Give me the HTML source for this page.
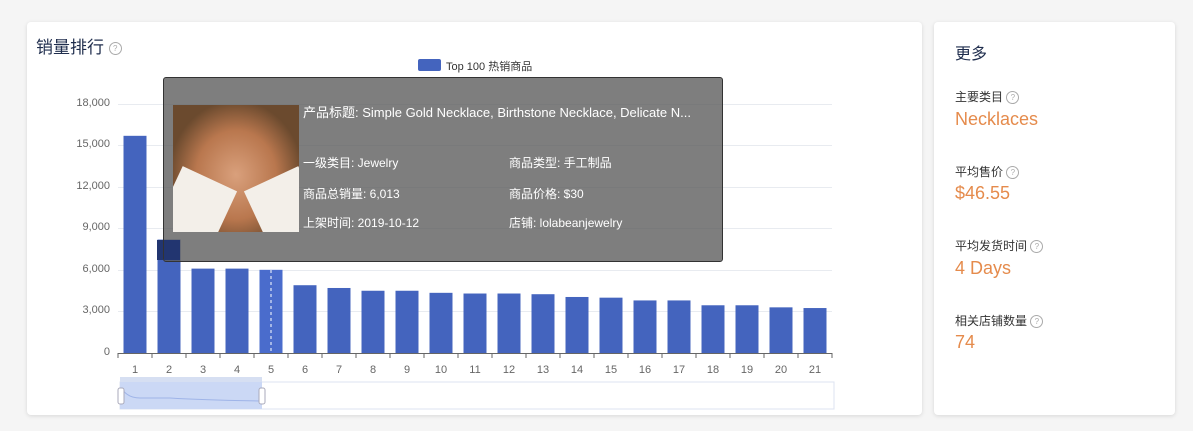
<!DOCTYPE html>
<html><head><meta charset="utf-8"><style>
body{margin:0;width:1193px;height:431px;background:#f5f5f5;font-family:"Liberation Sans","Noto Sans CJK SC",sans-serif;position:relative;overflow:hidden}
.card{position:absolute;background:#fff;border-radius:4px;box-shadow:0 1px 4px rgba(0,0,0,.12)}
.q{display:inline-block;width:11px;height:11px;border:1px solid #aaa;border-radius:50%;font-size:8px;color:#aaa;text-align:center;line-height:11px;vertical-align:middle}
.lbl{position:absolute;left:955px;font-size:12px;color:#333}
.val{position:absolute;left:955px;font-size:18px;color:#e58b4c}
.yl{position:absolute;width:60px;left:50px;text-align:right;font-size:11px;color:#666}
.xl{position:absolute;width:34px;text-align:center;font-size:11px;color:#666;top:364px}
.tt{position:absolute;color:#fff;font-size:12px}
</style></head><body>
<div class="card" style="left:27px;top:22px;width:895px;height:393px"></div>
<div class="card" style="left:934px;top:22px;width:241px;height:393px"></div>
<div style="position:absolute;left:36px;top:33px;font-size:17px;color:#1f2d4d">销量排行 <span class="q">?</span></div>
<div style="position:absolute;left:418px;top:59px;width:23px;height:12px;background:#4464be;border-radius:2px"></div>
<div style="position:absolute;left:446px;top:58px;font-size:11px;color:#333">Top 100 热销商品</div>
<svg style="position:absolute;left:0;top:0" width="1193" height="431">
<g stroke="#e8ebf0" stroke-width="1">
<line x1="118" x2="832" y1="104.5" y2="104.5"/><line x1="118" x2="832" y1="145.5" y2="145.5"/><line x1="118" x2="832" y1="187.5" y2="187.5"/><line x1="118" x2="832" y1="228.5" y2="228.5"/><line x1="118" x2="832" y1="270.5" y2="270.5"/><line x1="118" x2="832" y1="311.5" y2="311.5"/>
</g>
<g fill="#4464be" id="bars"></g>
<line x1="118" x2="832" y1="353.5" y2="353.5" stroke="#666"/>
<g stroke="#666" id="ticks"></g>
<line x1="271" x2="271" y1="240" y2="353" stroke="#fff" stroke-dasharray="3,3"/>
<rect x="120" y="382" width="714" height="27" fill="#fff" stroke="#dde3f0"/>
<rect x="120" y="382" width="142" height="27" fill="#cbd8f5"/>
<rect x="120" y="377" width="142" height="5" fill="#d6dff2"/>
<path d="M122 389 Q128 398 140 398 L170 398 Q200 400 260 401" stroke="#9fb4e8" fill="none"/>
<rect x="118" y="388" width="6" height="16" rx="2" fill="#fff" stroke="#aab"/>
<rect x="259" y="388" width="6" height="16" rx="2" fill="#fff" stroke="#aab"/>
</svg>
<div class="yl" style="top:97px">18,000</div><div class="yl" style="top:138px">15,000</div><div class="yl" style="top:180px">12,000</div><div class="yl" style="top:221px">9,000</div><div class="yl" style="top:263px">6,000</div><div class="yl" style="top:304px">3,000</div><div class="yl" style="top:346px">0</div>
<div id="xls"></div>
<div style="position:absolute;left:163px;top:77px;width:558px;height:183px;background:rgba(90,90,90,.78);border:1px solid #333;border-radius:3px"></div>
<div style="position:absolute;left:157px;top:240px;width:6px;height:20px;background:#223570"></div>
<div style="position:absolute;left:164px;top:240px;width:16px;height:20px;background:#223570"></div>
<div style="position:absolute;left:173px;top:105px;width:126px;height:127px;background:radial-gradient(ellipse at 50% 55%,#d9a07c 0%,#b9774e 45%,#6b4a2e 75%);overflow:hidden">
<div style="position:absolute;left:-10px;top:70px;width:60px;height:80px;background:#f3efe9;transform:rotate(25deg)"></div>
<div style="position:absolute;left:85px;top:70px;width:60px;height:80px;background:#f3efe9;transform:rotate(-25deg)"></div></div>
<div class="tt" style="left:303px;top:102px;font-size:13px">产品标题: Simple Gold Necklace, Birthstone Necklace, Delicate N...</div>
<div class="tt" style="left:303px;top:154px">一级类目: Jewelry</div><div class="tt" style="left:509px;top:154px">商品类型: 手工制品</div>
<div class="tt" style="left:303px;top:185px">商品总销量: 6,013</div><div class="tt" style="left:509px;top:185px">商品价格: $30</div>
<div class="tt" style="left:303px;top:214px">上架时间: 2019-10-12</div><div class="tt" style="left:509px;top:214px">店铺: lolabeanjewelry</div>
<div style="position:absolute;left:955px;top:40px;font-size:16px;color:#1f2d4d">更多</div>
<div class="lbl" style="top:88px">主要类目 <span class="q">?</span></div><div class="val" style="top:109px">Necklaces</div>
<div class="lbl" style="top:163px">平均售价 <span class="q">?</span></div><div class="val" style="top:183px">$46.55</div>
<div class="lbl" style="top:237px">平均发货时间 <span class="q">?</span></div><div class="val" style="top:258px">4 Days</div>
<div class="lbl" style="top:312px">相关店铺数量 <span class="q">?</span></div><div class="val" style="top:332px">74</div>
<script>
var v=[15700,8200,6100,6100,6013,4900,4700,4500,4500,4350,4300,4300,4250,4050,4000,3800,3800,3450,3450,3300,3250];
var b='',t='',x='';
for(var i=0;i<21;i++){var h=v[i]/18000*249;var cx=118+34*i+17;
b+='<rect x="'+(cx-11.5)+'" y="'+(353-h)+'" width="23" height="'+h+'"'+(i==4?' fill="#4a6ccc"':'')+'/>';
t+='<line x1="'+(118+34*i)+'" x2="'+(118+34*i)+'" y1="353" y2="358"/>';
x+='<div class="xl" style="left:'+(cx-17)+'px">'+(i+1)+'</div>';}
t+='<line x1="832" x2="832" y1="353" y2="358"/>';
document.getElementById('bars').innerHTML=b;document.getElementById('ticks').innerHTML=t;document.getElementById('xls').innerHTML=x;
</script>
</body></html>
